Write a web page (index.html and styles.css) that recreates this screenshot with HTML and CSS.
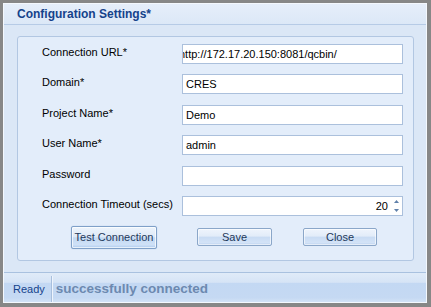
FILE: index.html
```html
<!DOCTYPE html>
<html>
<head>
<meta charset="utf-8">
<link rel="stylesheet" href="styles.css">
</head>
<body>
<div class="window">
  <div class="titlebar">Configuration Settings*</div>
  <div class="content">
    <div class="panel">
      <div class="form">
        <div class="label">Connection URL*</div>
        <div class="field field-url"><span class="scroll">http://172.17.20.150:8081/qcbin/</span></div>
        <div class="label">Domain*</div>
        <div class="field">CRES</div>
        <div class="label">Project Name*</div>
        <div class="field">Demo</div>
        <div class="label">User Name*</div>
        <div class="field">admin</div>
        <div class="label">Password</div>
        <div class="field"></div>
        <div class="label">Connection Timeout (secs)</div>
        <div class="field field-spin">
          <span class="spin-value">20</span>
          <svg class="spin" width="7" height="16" viewBox="0 0 7 16">
            <path d="M3.5 2 L6 5 L1 5 Z" fill="#5f80aa"/>
            <path d="M1 11 L6 11 L3.5 14 Z" fill="#5f80aa"/>
          </svg>
        </div>
      </div>
      <div class="buttons">
        <button class="btn btn-test">Test Connection</button>
        <button class="btn btn-save">Save</button>
        <button class="btn btn-close">Close</button>
      </div>
    </div>
  </div>
  <div class="statusbar">
    <span class="status-ready">Ready</span>
    <span class="status-sep"></span>
    <span class="status-msg">successfully connected</span>
  </div>
</div>
</body>
</html>
```

FILE: styles.css
```css
html, body {
  margin: 0;
  padding: 0;
  background: #ffffff;
}
.window {
  width: 431px;
  height: 307px;
  box-sizing: border-box;
  border-style: solid;
  border-color: #878787;
  border-width: 3px 4px 4px 3px;
  box-shadow: inset 1px 1px 0 #f4f8fd, inset -1px -1px 0 #f4f8fd;
  display: flex;
  flex-direction: column;
  background: #dbe7f6;
  font-family: "Liberation Sans", Arial, sans-serif;
  font-size: 11px;
  color: #000;
  padding: 1px;
}
.titlebar {
  height: 21px;
  box-sizing: border-box;
  border-bottom: 1px solid #b6cbe6;
  background: linear-gradient(#e6eefa, #dce8f7);
  color: #15428b;
  font-weight: bold;
  font-size: 12px;
  padding-left: 13px;
  line-height: 20px;
}
.content {
  flex: 1;
  display: flex;
  flex-direction: column;
  padding: 11px 12px 11px 13px;
  background: #dbe7f6;
}
.panel {
  border: 1px solid #b2c7e2;
  border-radius: 3px;
  background: #e3edfa;
  padding: 7px 9px 10px 24px;
  flex: 1;
  display: flex;
  flex-direction: column;
}
.form {
  display: grid;
  grid-template-columns: 140px 221px;
  grid-auto-rows: 20px;
  row-gap: 10.4px;
}
.label {
  line-height: 14px;
  padding-top: 1px;
  white-space: nowrap;
}
.field {
  background: #ffffff;
  border: 1px solid #abc0dc;
  box-sizing: border-box;
  height: 20px;
  line-height: 18px;
  padding-left: 3px;
  overflow: hidden;
  white-space: nowrap;
}
.field-url {
  padding-left: 0;
}
.field-url .scroll {
  display: inline-block;
  margin-left: -4px;
}
.field-spin {
  display: flex;
  justify-content: flex-end;
  align-items: center;
  padding-right: 2px;
}
.spin-value {
  margin-right: 5px;
}
.spin {
  display: block;
}
.buttons {
  display: flex;
  align-items: center;
  margin-top: 10px;
  height: 23px;
}
.btn {
  font-family: "Liberation Sans", Arial, sans-serif;
  font-size: 11px;
  color: #1e395b;
  border: 1px solid #8ba7c9;
  border-radius: 2px;
  background: linear-gradient(#eef4fc 0%, #e2ecf9 45%, #c8dbf3 50%, #d3e3f7 85%, #b8cfec 100%);
  box-shadow: inset 0 0 0 1px rgba(255,255,255,0.6);
  padding: 0;
  height: 18px;
  line-height: 16px;
}
.btn-test {
  margin-left: 29px;
  width: 86px;
  height: 23px;
  line-height: 21px;
  border-color: #7fa0c8;
  background: linear-gradient(#edf4fc 0%, #dfeaf8 45%, #c3d9f3 52%, #cfe1f7 85%, #a9c7ec 100%);
  box-shadow: inset 0 0 0 1px rgba(255,255,255,0.7), 0 0 1px #9cbbe2;
}
.btn-save {
  margin-left: 40px;
  width: 75px;
}
.btn-close {
  margin-left: 31px;
  width: 74px;
}
.statusbar {
  height: 30px;
  box-sizing: border-box;
  border-top: 1px solid #a9c1df;
  background: linear-gradient(#e0ebf8 0%, #d6e4f6 32%, #c3d8f3 36%, #c5d9f3 85%, #d2e2f6 100%);
  display: flex;
  align-items: center;
  padding-left: 9px;
}
.status-ready {
  color: #15428b;
  font-size: 11px;
  margin-top: 3px;
}
.status-sep {
  align-self: stretch;
  width: 1px;
  background: #a8bfdd;
  box-shadow: 1px 0 0 #eef4fc;
  margin: 3px 4px 0 6px;
}
.status-msg {
  color: #6c89b0;
  font-weight: bold;
  font-size: 13.5px;
  margin-top: 1px;
}
```
